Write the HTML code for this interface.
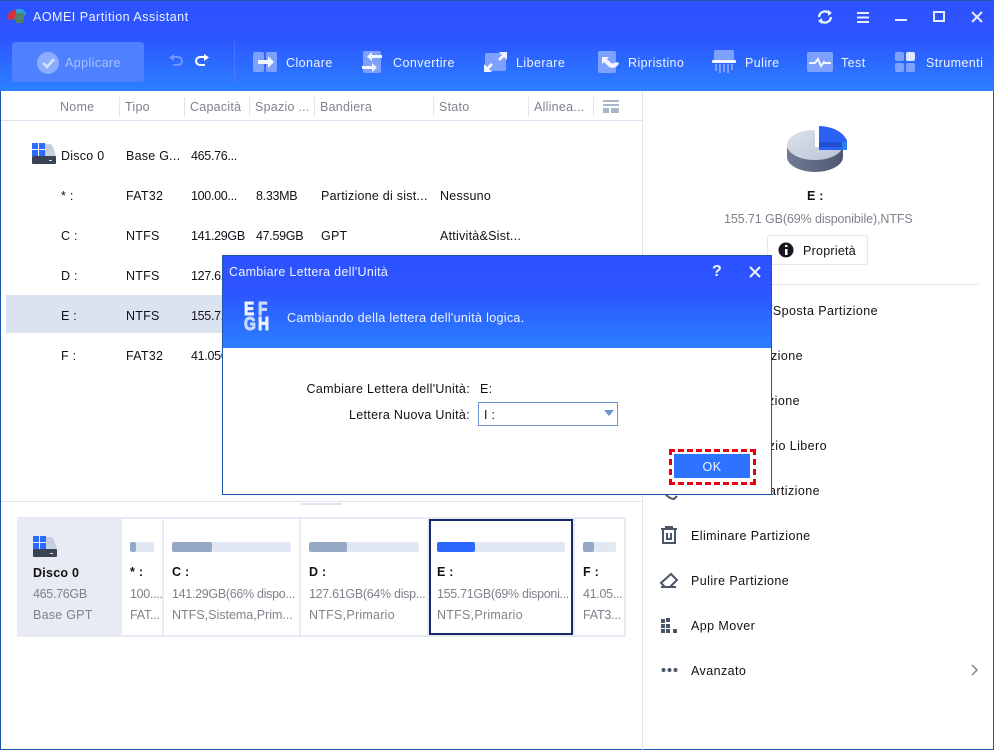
<!DOCTYPE html>
<html><head><meta charset="utf-8"><style>
*{box-sizing:border-box;margin:0;padding:0}
html,body{width:994px;height:750px;overflow:hidden;background:#fff}
body{position:relative;font-family:"Liberation Sans",sans-serif;font-size:12.5px;color:#111118}
.t{position:absolute;line-height:20px;height:20px;white-space:nowrap;letter-spacing:.25px;margin-top:1px}
.w{color:#eef3ff}.g{color:#80828c}.b{font-weight:bold;color:#111}
.s{letter-spacing:.42px}
.n{letter-spacing:-.3px}
.abs,svg{position:absolute}
.bar{position:absolute;height:10px;background:#e2e8f3;border-radius:2px;overflow:hidden}
.bar i{display:block;height:10px;background:#95a8c6;border-radius:2px}
.cell{position:absolute;top:519px;height:116px;background:#fff}
.sep{position:absolute;top:97px;height:20px;width:1px;background:#e2e7f0}
.L{position:absolute;font-weight:bold;font-size:18px;line-height:15px;height:15px;width:12px;transform:scaleX(.85);transform-origin:0 0;letter-spacing:0;-webkit-text-stroke:1px currentColor}
</style></head><body>
<div class="abs" style="left:0;top:0;width:994px;height:750px;border:1px solid #1c55ae;border-top:0"></div>
<div class="abs" style="left:0;top:0;width:994px;height:91px;background:linear-gradient(#2d52ff 0,#2d55ff 40%,#2b80ff 100%);border-top:1px solid #1c55ae"></div>
<svg style="left:7px;top:8px" width="20" height="17" viewBox="0 0 20 17"><path d="M1 9a7 7 0 0 1 7-7h3v9H5l-2 1-2-1z" fill="#d8303c"/><path d="M9 1h5a6 6 0 0 1 5 6l-3 1H9z" fill="#2f9fd8"/><path d="M9 5h8v7h-1v3H9v-3H7z" fill="#55806a"/></svg>
<div class="t w" style="left:33px;top:6px;letter-spacing:.5px">AOMEI Partition Assistant</div>
<!-- window controls -->
<svg style="left:816px;top:8px" width="18" height="18" viewBox="0 0 18 18" fill="none" stroke="#eef3ff" stroke-width="2.2"><path d="M3 9a6 6 0 0 1 10-4"/><path d="M15 9a6 6 0 0 1-10 4"/><path d="M12 2l4 3-4 3z M6 16l-4-3 4-3z" fill="#eef3ff" stroke="none"/></svg>
<svg style="left:856px;top:10px" width="15" height="14" stroke="#e4ebff" stroke-width="2"><path d="M1 3h12M1 7.500h12M1 12h12"/></svg>
<div class="abs" style="left:895px;top:19px;width:12px;height:2px;background:#e4ebff"></div>
<div class="abs" style="left:933px;top:11px;width:12px;height:11px;border:2px solid #e4ebff"></div>
<svg style="left:971px;top:11px" width="12" height="12" stroke="#e4ebff" stroke-width="2"><path d="M1 1l10 10M11 1L1 11"/></svg>
<!-- toolbar -->
<div class="abs" style="left:12px;top:42px;width:132px;height:40px;background:#4f80ff;border-radius:3px"></div>
<svg style="left:37px;top:52px" width="22" height="22"><circle cx="11" cy="11" r="11" fill="#8cacff"/><path d="M6 11l4 4 7-8" fill="none" stroke="#d6e2ff" stroke-width="2.5"/></svg>
<div class="t s" style="left:65px;top:52px;color:#a8c2ff">Applicare</div>
<svg style="left:168px;top:54px" width="16" height="14" fill="none" stroke="#6f97ff" stroke-width="2"><path d="M5 3H10a4 4 0 0 1 0 8H5"/><path d="M6 0L1 3.500 6 7z" fill="#6f97ff" stroke="none"/></svg>
<svg style="left:194px;top:54px" width="16" height="14" fill="none" stroke="#fff" stroke-width="2"><path d="M11 3H6a4 4 0 0 0 0 8h5"/><path d="M10 0l5 3.500L10 7z" fill="#fff" stroke="none"/></svg>
<div class="abs" style="left:234px;top:42px;width:1px;height:40px;background:#4a78ff"></div>
<svg style="left:253px;top:51px" width="24" height="22"><rect width="11" height="20" y="1" rx="2" fill="#7ea0ff"/><rect x="13" width="11" height="20" y="1" rx="2" fill="#7ea0ff"/><path d="M5 9h10V5l6 6-6 6v-4H5z" fill="#f2f5ff"/></svg>
<div class="t w s" style="left:286px;top:52px">Clonare</div>
<svg style="left:362px;top:50px" width="20" height="24"><rect x="1" y="1" width="18" height="22" rx="2" fill="#7ea0ff"/><path d="M20 5h-10V2L5 6.500 10 11V8h10z M0 16h10v-3l5 4.500L10 22v-3H0z" fill="#f2f5ff"/></svg>
<div class="t w s" style="left:393px;top:52px">Convertire</div>
<svg style="left:484px;top:52px" width="23" height="20"><rect x="1" y="1" width="21" height="18" rx="2" fill="#7ea0ff"/><path d="M15 0h8v8l-3-3-4 4-2-2 4-4z M8 20H0v-8l3 3 4-4 2 2-4 4z" fill="#f2f5ff"/></svg>
<div class="t w s" style="left:516px;top:52px">Liberare</div>
<svg style="left:598px;top:51px" width="23" height="23"><rect width="18" height="22" rx="2" fill="#7ea0ff"/><path d="M4 6h7l-2 2 4 4c2 1 4 0 5-1l3 1c-1 4-6 6-10 4l-5-5-2 2z" fill="#f2f5ff"/></svg>
<div class="t w s" style="left:628px;top:52px">Ripristino</div>
<svg style="left:712px;top:50px" width="24" height="24"><rect x="2" width="20" height="11" rx="2" fill="#7ea0ff"/><rect x="0" y="10" width="24" height="3" rx="1" fill="#f2f5ff"/><path d="M3 14h2v7H3zM7 14h2v9H7zM11 14h2v8h-2zM15 14h2v9h-2zM19 14h2v6h-2z" fill="#7ea0ff"/></svg>
<div class="t w s" style="left:745px;top:52px">Pulire</div>
<svg style="left:807px;top:52px" width="26" height="20"><rect width="26" height="20" rx="2" fill="#7ea0ff"/><path d="M2 11h6l3-4 3 7 3-4 1 1h6" fill="none" stroke="#f2f5ff" stroke-width="2"/></svg>
<div class="t w s" style="left:841px;top:52px">Test</div>
<svg style="left:895px;top:52px" width="20" height="20"><rect width="9" height="9" rx="2" fill="#7ea0ff"/><rect x="11" width="9" height="9" rx="2" fill="#dfe7ff"/><rect y="11" width="9" height="9" rx="2" fill="#7ea0ff"/><rect x="11" y="11" width="9" height="9" rx="2" fill="#7ea0ff"/></svg>
<div class="t w s" style="left:926px;top:52px">Strumenti</div>
<!-- table header -->
<div class="abs" style="left:1px;top:120px;width:641px;height:1px;background:#d9e0ee"></div>
<div class="abs" style="left:642px;top:91px;width:1px;height:659px;background:#dfe4ee"></div>
<div class="sep" style="left:119px"></div><div class="sep" style="left:184px"></div><div class="sep" style="left:249px"></div><div class="sep" style="left:314px"></div><div class="sep" style="left:433px"></div><div class="sep" style="left:528px"></div><div class="sep" style="left:593px"></div>
<div class="t g" style="left:60px;top:96px">Nome</div>
<div class="t g" style="left:125px;top:96px">Tipo</div>
<div class="t g" style="left:190px;top:96px">Capacità</div>
<div class="t g" style="left:255px;top:96px">Spazio ...</div>
<div class="t g" style="left:320px;top:96px">Bandiera</div>
<div class="t g" style="left:439px;top:96px">Stato</div>
<div class="t g" style="left:534px;top:96px">Allinea...</div>
<svg style="left:603px;top:100px" width="16" height="13" fill="#a9b6ca"><rect width="16" height="2"/><rect y="4" width="16" height="2"/><rect y="8" width="6" height="5"/><rect x="8" y="8" width="8" height="5"/></svg>
<!-- rows -->
<div class="abs" style="left:6px;top:295px;width:636px;height:38px;background:#dbe3f1"></div>
<svg style="left:32px;top:143px" width="24" height="21"><path d="M13 1h5c1 0 2 1 3 3l3 9H13z" fill="#c7cfdf"/><rect y="13" width="24" height="8" rx="1" fill="#3a4354"/><rect x="17" y="17" width="3" height="1" fill="#dfe6f5"/><g fill="#2b6bff"><rect width="6" height="6"/><rect x="7" width="6" height="6"/><rect y="7" width="6" height="6"/><rect x="7" y="7" width="6" height="6"/></g></svg>
<div class="t" style="left:61px;top:145px">Disco 0</div><div class="t" style="left:126px;top:145px">Base G...</div><div class="t n" style="left:191px;top:145px">465.76...</div>
<div class="t" style="left:61px;top:185px">* :</div><div class="t" style="left:126px;top:185px">FAT32</div><div class="t n" style="left:191px;top:185px">100.00...</div><div class="t n" style="left:256px;top:185px">8.33MB</div><div class="t" style="left:321px;top:185px">Partizione di sist...</div><div class="t" style="left:440px;top:185px">Nessuno</div>
<div class="t" style="left:61px;top:225px">C :</div><div class="t" style="left:126px;top:225px">NTFS</div><div class="t n" style="left:191px;top:225px">141.29GB</div><div class="t n" style="left:256px;top:225px">47.59GB</div><div class="t" style="left:321px;top:225px">GPT</div><div class="t" style="left:440px;top:225px">Attività&amp;Sist...</div>
<div class="t" style="left:61px;top:265px">D :</div><div class="t" style="left:126px;top:265px">NTFS</div><div class="t n" style="left:191px;top:265px">127.61GB</div>
<div class="t" style="left:61px;top:305px">E :</div><div class="t" style="left:126px;top:305px">NTFS</div><div class="t n" style="left:191px;top:305px">155.71GB</div>
<div class="t" style="left:61px;top:345px">F :</div><div class="t" style="left:126px;top:345px">FAT32</div><div class="t n" style="left:191px;top:345px">41.05GB</div>
<!-- lower panel -->
<div class="abs" style="left:1px;top:501px;width:641px;height:1px;background:#dfe4ee"></div>
<div class="abs" style="left:301px;top:503px;width:41px;height:2px;background:#dfe4ee"></div>
<div class="abs" style="left:17px;top:517px;width:609px;height:120px;background:#e8ebf3"></div>
<div class="cell" style="left:122px;width:40px"></div><div class="cell" style="left:164px;width:135px"></div><div class="cell" style="left:301px;width:126px"></div>
<div class="cell" style="left:429px;width:144px;border:2px solid #16286b"></div><div class="cell" style="left:575px;width:49px"></div>
<svg style="left:33px;top:536px" width="24" height="21"><path d="M13 1h5c1 0 2 1 3 3l3 9H13z" fill="#c7cfdf"/><rect y="13" width="24" height="8" rx="1" fill="#3a4354"/><rect x="17" y="17" width="3" height="1" fill="#dfe6f5"/><g fill="#2b6bff"><rect width="6" height="6"/><rect x="7" width="6" height="6"/><rect y="7" width="6" height="6"/><rect x="7" y="7" width="6" height="6"/></g></svg>
<div class="t b" style="left:33px;top:562px">Disco 0</div><div class="t g n" style="left:33px;top:583px">465.76GB</div><div class="t g" style="left:33px;top:604px">Base GPT</div>
<div class="bar" style="left:130px;top:542px;width:24px"><i style="width:6px"></i></div>
<div class="bar" style="left:172px;top:542px;width:119px"><i style="width:40px"></i></div>
<div class="bar" style="left:309px;top:542px;width:110px"><i style="width:38px"></i></div>
<div class="bar" style="left:437px;top:542px;width:128px"><i style="width:38px;background:#2b66ff"></i></div>
<div class="bar" style="left:583px;top:542px;width:33px"><i style="width:11px"></i></div>
<div class="t b" style="left:130px;top:561px">* :</div><div class="t g n" style="left:130px;top:583px">100....</div><div class="t g" style="left:130px;top:604px;letter-spacing:-.2px">FAT...</div>
<div class="t b" style="left:172px;top:561px">C :</div><div class="t g n" style="left:172px;top:583px">141.29GB(66% dispo...</div><div class="t g" style="left:172px;top:604px;letter-spacing:0">NTFS,Sistema,Prim...</div>
<div class="t b" style="left:309px;top:561px">D :</div><div class="t g n" style="left:309px;top:583px">127.61GB(64% disp...</div><div class="t g" style="left:309px;top:604px">NTFS,Primario</div>
<div class="t b" style="left:437px;top:561px">E :</div><div class="t g n" style="left:437px;top:583px">155.71GB(69% disponi...</div><div class="t g" style="left:437px;top:604px">NTFS,Primario</div>
<div class="t b" style="left:583px;top:561px">F :</div><div class="t g n" style="left:583px;top:583px">41.05...</div><div class="t g" style="left:583px;top:604px;letter-spacing:-.2px">FAT3...</div>
<!-- right panel -->
<svg style="left:785px;top:124px" width="64" height="52"><defs><linearGradient id="p" x1="0" x2="1" y1="0" y2="1"><stop offset="0" stop-color="#dbe0ea"/><stop offset="1" stop-color="#bcc5d6"/></linearGradient><linearGradient id="q" x1="0" x2="1"><stop offset="0" stop-color="#717b96"/><stop offset="1" stop-color="#4e5874"/></linearGradient></defs>
<path d="M2 24v9c0 8 12.500 15 28 15s28-7 28-15V24z" fill="url(#q)"/>
<path d="M30 6C14.500 6 2 12.700 2 21s12.500 15 28 15 28-6.700 28-15V23H30z" fill="url(#p)"/>
<path d="M34 2c14 .3 25 6.500 28 15v9H34z" fill="#2b62f5"/><path d="M34 18h23v5H34z" fill="#1f50cf"/><path d="M57 18h5v8h-5z" fill="#2b80f0"/></svg>
<div class="t b" style="left:807px;top:185px">E :</div>
<div class="t g" style="left:724px;top:208px;letter-spacing:-.1px">155.71 GB(69% disponibile),NTFS</div>
<div class="abs" style="left:767px;top:235px;width:101px;height:30px;border:1px solid #e2e6ee;border-radius:3px"></div>
<svg style="left:778px;top:242px" width="16" height="16"><circle cx="8" cy="8" r="7.500" fill="#16161c"/><path d="M7 3h2.500v2H7zM7 7h2.500v6H7z" fill="#fff"/></svg>
<div class="t" style="left:803px;top:240px">Proprietà</div>
<div class="abs" style="left:657px;top:284px;width:322px;height:1px;background:#dfe4ee"></div>
<div class="t s" style="right:116px;top:300px">Ridimensionare/Sposta Partizione</div>
<div class="t s" style="right:191px;top:345px">Spostare Partizione</div>
<div class="t s" style="right:194px;top:390px">Unire Partizione</div>
<div class="t s" style="right:167px;top:435px">Allocare Spazio Libero</div>
<div class="t s" style="right:174px;top:480px">Clonare Partizione</div>
<svg style="left:660px;top:484px" width="20" height="17" fill="none" stroke="#4b5568" stroke-width="2"><path d="M3 6c2 5 7 9 11 9l3-3"/></svg>
<svg style="left:661px;top:526px" width="16" height="18" fill="none" stroke="#4b5568" stroke-width="2"><path d="M0 3h16M5 3V1h6v2M2 3v14h12V3M6 7v6h4V7"/></svg>
<div class="t s" style="left:691px;top:525px">Eliminare Partizione</div>
<svg style="left:660px;top:572px" width="18" height="17" fill="none" stroke="#4b5568" stroke-width="2"><path d="M11 2l6 6-7 7H5l-4-4z M1 15h15"/></svg>
<div class="t s" style="left:691px;top:570px">Pulire Partizione</div>
<svg style="left:661px;top:618px" width="17" height="15" fill="#4b5568"><rect width="4" height="4" x="0" y="6"/><rect width="4" height="4" x="5" y="6"/><rect width="4" height="4" x="5" y="0"/><rect width="4" height="4" x="0" y="11"/><rect width="4" height="4" x="5" y="11"/><rect width="4" height="4" x="12" y="11"/><rect width="4" height="4" x="0" y="1"/></svg>
<div class="t s" style="left:691px;top:615px">App Mover</div>
<svg style="left:661px;top:667px" width="17" height="6" fill="#4b5568"><circle cx="2.500" cy="3" r="2"/><circle cx="8.500" cy="3" r="2"/><circle cx="14.500" cy="3" r="2"/></svg>
<div class="t s" style="left:691px;top:660px">Avanzato</div>
<svg style="left:971px;top:664px" width="8" height="12" fill="none" stroke="#7d8796" stroke-width="1.500"><path d="M1 1l5 5-5 5"/></svg>
<!-- dialog -->
<div class="abs" style="left:222px;top:255px;width:550px;height:240px;background:#fff;border:1px solid #1c55ae"></div>
<div class="abs" style="left:223px;top:256px;width:548px;height:92px;background:linear-gradient(#2d52ff 0,#2d55ff 40%,#2b80ff 100%)"></div>
<div class="t w" style="left:229px;top:261px;letter-spacing:.3px">Cambiare Lettera dell'Unità</div>
<div class="t w" style="left:712px;top:261px;font-size:16px;letter-spacing:0;font-weight:bold">?</div>
<svg style="left:749px;top:266px" width="12" height="12" stroke="#eef3ff" stroke-width="2"><path d="M1 1l10 10M11 1L1 11"/></svg>
<div class="L" style="left:244px;top:302px;color:#eef3ff">E</div>
<div class="L" style="left:258px;top:302px;color:#c8d8ff">F</div>
<div class="L" style="left:244px;top:317px;color:#c8d8ff">G</div>
<div class="L" style="left:258px;top:317px;color:#eef3ff">H</div>
<div class="t w" style="left:287px;top:307px;letter-spacing:.32px">Cambiando della lettera dell'unità logica.</div>
<div class="t" style="right:524px;top:378px;letter-spacing:.32px">Cambiare Lettera dell'Unità:</div>
<div class="t" style="left:480px;top:378px">E:</div>
<div class="t" style="right:524px;top:404px;letter-spacing:.32px">Lettera Nuova Unità:</div>
<div class="abs" style="left:478px;top:402px;width:140px;height:24px;border:1px solid #6c93d4"></div>
<div class="t" style="left:484px;top:404px">I :</div>
<svg style="left:604px;top:410px" width="10" height="6"><path d="M0 0h10L5 6z" fill="#6c93d4"/></svg>
<div class="abs" style="left:669px;top:449px;width:87px;height:36px;border:3px dashed #e60012"></div>
<div class="abs" style="left:674px;top:454px;width:76px;height:24px;background:#2e73ff;color:#eef3ff;text-align:center;line-height:26px;letter-spacing:.45px">OK</div>
</body></html>
